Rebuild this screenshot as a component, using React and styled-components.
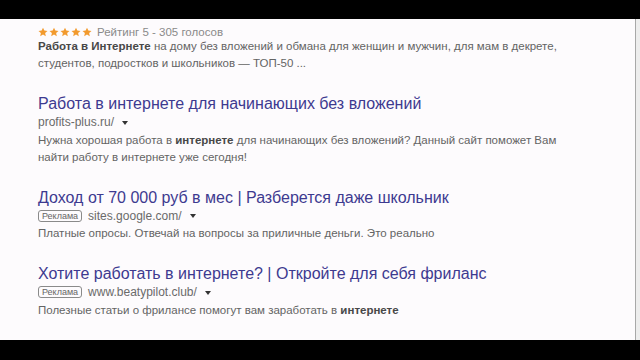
import React from "react";
import styled, { createGlobalStyle } from "styled-components";

const GlobalStyle = createGlobalStyle`
  html, body { margin: 0; padding: 0; background: #000; }
  body { font-family: "Liberation Sans", Arial, sans-serif; }
`;

const Screen = styled.div`
  width: 640px;
  height: 360px;
  box-sizing: border-box;
  padding: 19px 0 20px;
  background: #000;
  display: flex;
  flex-direction: column;
`;

const Frame = styled.div`
  flex: 1;
  display: flex;
  background: #eeeeee;
  overflow: hidden;
`;

const Page = styled.main`
  flex: 1;
  background: #fdfbfd;
  border-right: 1px solid #a8a8a8;
  padding: 6px 0 0 38px;
  display: flex;
  flex-direction: column;
  gap: 23px;
`;

const EdgeStrip = styled.div`
  width: 4px;
  background: #ededed;
`;

const Result = styled.section`
  display: flex;
  flex-direction: column;
`;

const RatingRow = styled.div`
  display: flex;
  align-items: center;
  gap: 5px;
  height: 13px;
  font-size: 11.5px;
  color: #8a8a8a;
`;

const Stars = styled.div`
  display: flex;
  gap: 1px;
`;

const Title = styled.a`
  font-size: 16px;
  line-height: 18px;
  color: #3d3a90;
  text-decoration: none;
  white-space: nowrap;
`;

const UrlRow = styled.div`
  display: flex;
  align-items: center;
  height: 18px;
  gap: 6px;
  font-size: 12px;
  color: #6a6a6a;
`;

const Badge = styled.span`
  font-size: 9px;
  line-height: 10px;
  color: #666;
  border: 1px solid #8a8a8a;
  border-radius: 3px;
  padding: 0 3px;
`;

const Caret = styled.span`
  width: 0;
  height: 0;
  border-left: 3px solid transparent;
  border-right: 3px solid transparent;
  border-top: 4px solid #333;
  margin-left: 2px;
  margin-top: 1px;
`;

const Snippet = styled.p`
  margin: ${(p) => (p.$tight ? "0" : "0.5px")} 0 0;
  font-size: 11.5px;
  line-height: 17px;
  color: #646464;
  width: 580px;
  b { color: #484848; font-weight: bold; }
`;

const Star = () => (
  <svg width="10" height="10" viewBox="0 0 24 24">
    <path
      d="M12 1.5l3.2 7 7.6.8-5.7 5.1 1.6 7.5L12 18l-6.7 3.9 1.6-7.5L1.2 9.3l7.6-.8z"
      fill="#f29a2e"
    />
  </svg>
);

const results = [
  {
    title: "Работа в интернете для начинающих без вложений",
    url: "profits-plus.ru/",
    ad: false,
    snippet: (
      <>
        Нужна хорошая работа в <b>интернете</b> для начинающих без вложений? Данный сайт поможет Вам
        <br />
        найти работу в интернете уже сегодня!
      </>
    ),
  },
  {
    title: "Доход от 70 000 руб в мес | Разберется даже школьник",
    url: "sites.google.com/",
    ad: true,
    snippet: <>Платные опросы. Отвечай на вопросы за приличные деньги. Это реально</>,
  },
  {
    title: "Хотите работать в интернете? | Откройте для себя фриланс",
    url: "www.beatypilot.club/",
    ad: true,
    snippet: (
      <>
        Полезные статьи о фрилансе помогут вам заработать в <b>интернете</b>
      </>
    ),
  },
];

export default function App() {
  return (
    <>
      <GlobalStyle />
      <Screen>
        <Frame>
          <Page>
            <Result>
              <RatingRow>
                <Stars>
                  {[0, 1, 2, 3, 4].map((i) => (
                    <Star key={i} />
                  ))}
                </Stars>
                Рейтинг 5 - 305 голосов
              </RatingRow>
              <Snippet $tight>
                <b>Работа в Интернете</b> на дому без вложений и обмана для женщин и мужчин, для мам в декрете,
                <br />
                студентов, подростков и школьников — ТОП-50 ...
              </Snippet>
            </Result>
            {results.map((r) => (
              <Result key={r.url}>
                <Title href="#">{r.title}</Title>
                <UrlRow>
                  {r.ad && <Badge>Реклама</Badge>}
                  <span>{r.url}</span>
                  <Caret />
                </UrlRow>
                <Snippet>{r.snippet}</Snippet>
              </Result>
            ))}
          </Page>
          <EdgeStrip />
        </Frame>
      </Screen>
    </>
  );
}
